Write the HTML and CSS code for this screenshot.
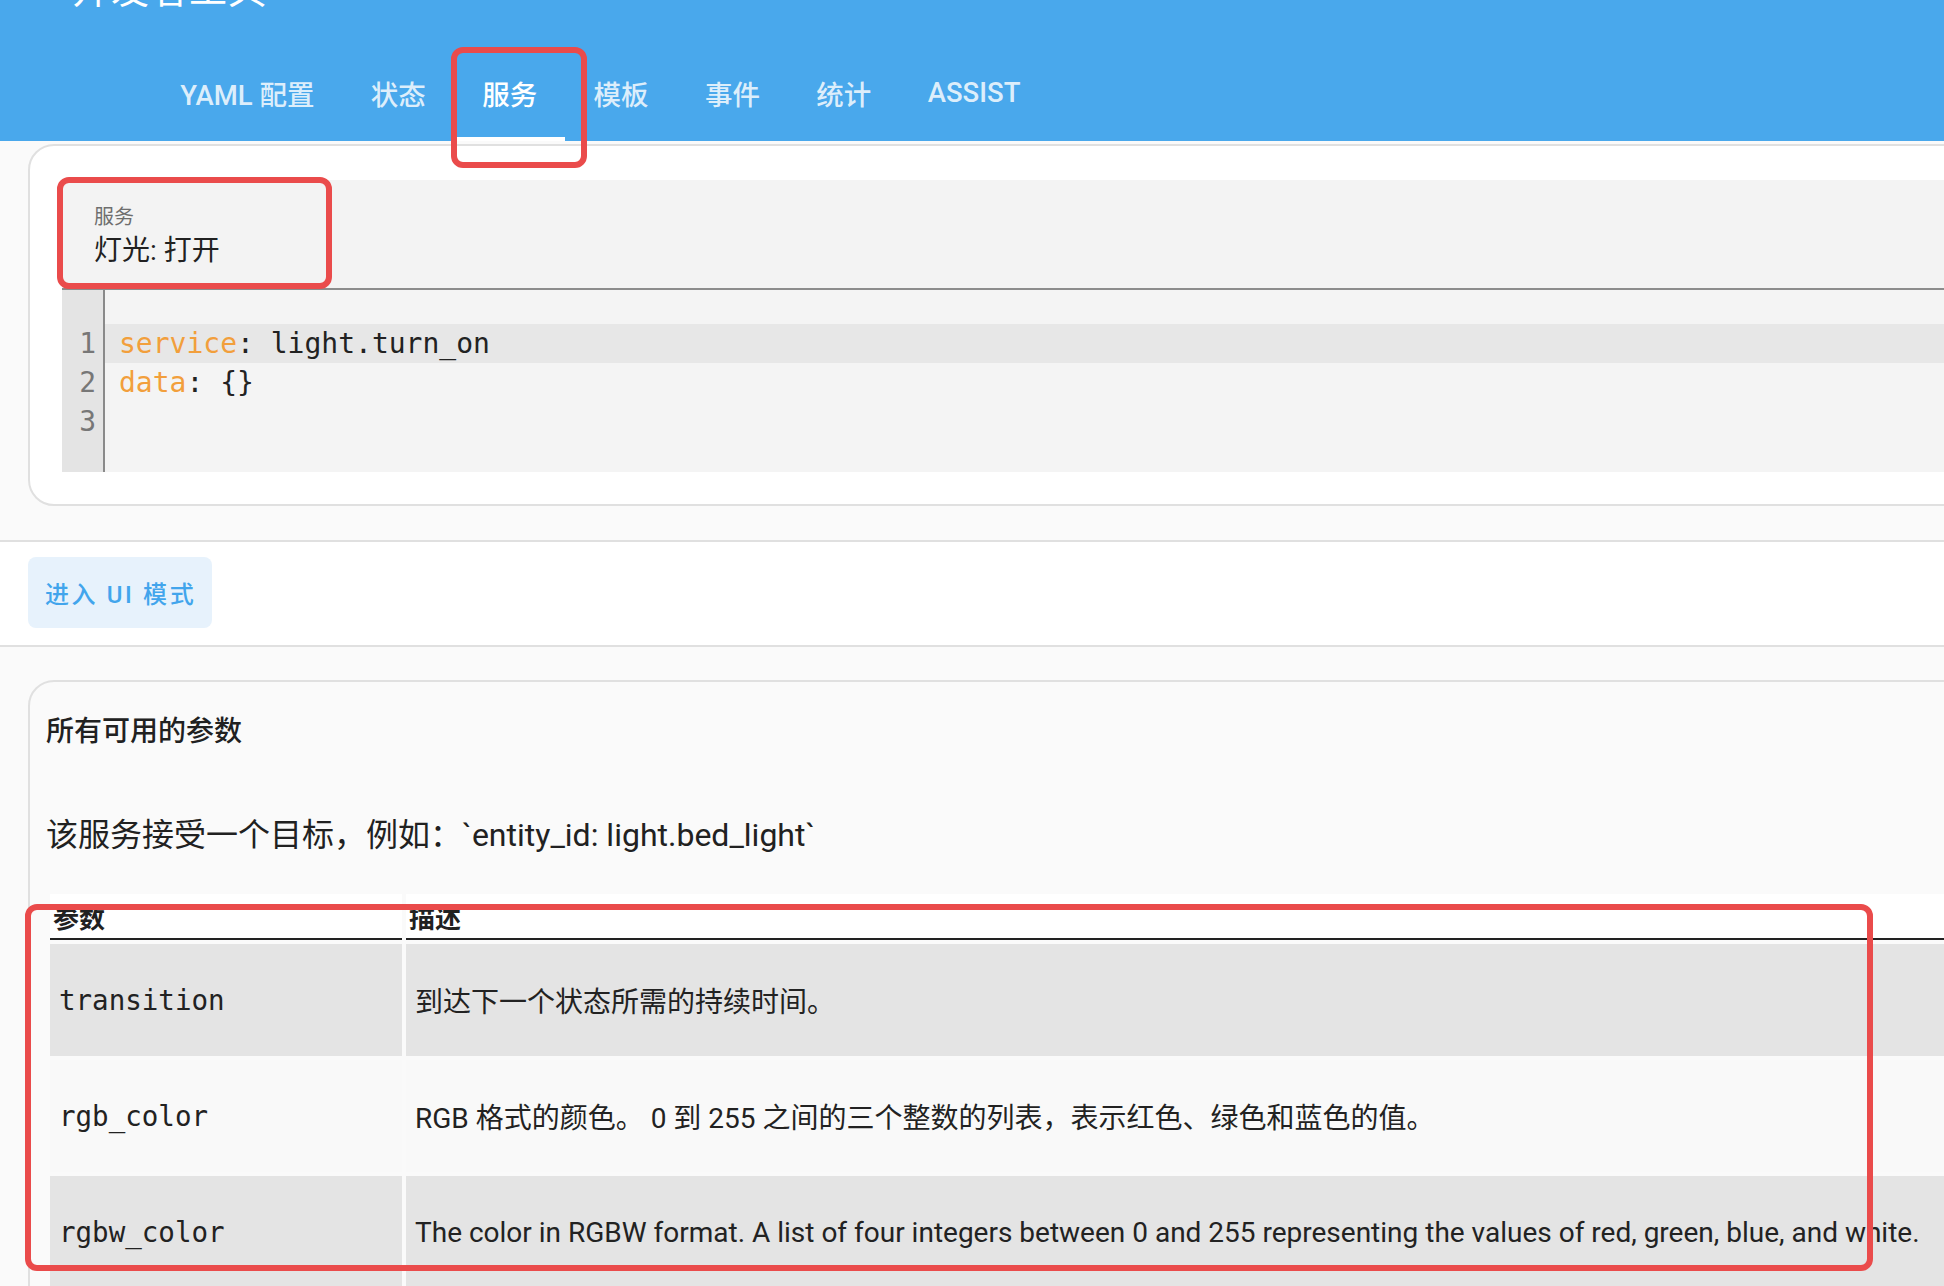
FILE: index.html
```html
<!DOCTYPE html>
<html lang="zh-CN">
<head>
<meta charset="utf-8">
<title>开发者工具</title>
<link rel="stylesheet" href="styles.css">
</head>
<body>
<div class="page">
  <header class="toolbar">
    <div class="title">开发者工具</div>
    <nav class="tabs">
      <div class="tab">YAML 配置</div>
      <div class="tab">状态</div>
      <div class="tab active">服务</div>
      <div class="tab">模板</div>
      <div class="tab">事件</div>
      <div class="tab">统计</div>
      <div class="tab">ASSIST</div>
    </nav>
  </header>

  <section class="top-area">
    <div class="card editor-card">
      <div class="field">
        <div class="field-label">服务</div>
        <div class="field-value">灯光: 打开</div>
      </div>
      <div class="code">
        <div class="gutter">
          <div class="num">1</div>
          <div class="num">2</div>
          <div class="num">3</div>
        </div>
        <div class="lines">
          <div class="line active"><span class="key">service</span>: light.turn_on</div>
          <div class="line"><span class="key">data</span>: {}</div>
          <div class="line"></div>
        </div>
      </div>
    </div>
  </section>

  <section class="button-bar">
    <button class="ui-btn">进入 UI 模式</button>
  </section>

  <section class="bottom-area">
    <div class="card fields-card">
      <h2 class="card-title">所有可用的参数</h2>
      <p class="desc">该服务接受一个目标，例如：`entity_id: light.bed_light`</p>
      <table class="params">
        <thead>
          <tr><th class="col-param">参数</th><th>描述</th></tr>
        </thead>
        <tbody>
          <tr><td class="param">transition</td><td>到达下一个状态所需的持续时间。</td></tr>
          <tr><td class="param">rgb_color</td><td>RGB 格式的颜色。 0 到 255 之间的三个整数的列表，表示红色、绿色和蓝色的值。</td></tr>
          <tr><td class="param">rgbw_color</td><td>The color in RGBW format. A list of four integers between 0 and 255 representing the values of red, green, blue, and white.</td></tr>
        </tbody>
      </table>
    </div>
  </section>

  <div class="mark mark-tab"></div>
  <div class="mark mark-field"></div>
  <div class="mark mark-table"></div>
</div>
</body>
</html>
```

FILE: styles.css
```css
html, body {
  margin: 0;
  padding: 0;
  overflow: hidden;
  background: #fafafa;
}

body {
  font-family: Roboto, "Noto Sans CJK SC", sans-serif;
  color: #212121;
}

.page {
  position: relative;
  width: 1944px;
  height: 1286px;
  overflow: hidden;
}

/* Header */
.toolbar {
  height: 141px;
  background: #49a8ec;
  color: #fff;
  display: flex;
  flex-direction: column;
}

.title {
  font-family: "Noto Sans CJK SC", sans-serif;
  font-size: 38px;
  line-height: 38px;
  height: 38px;
  margin-top: -32px;
  padding-left: 72px;
  letter-spacing: 1px;
}

.tabs {
  display: flex;
  margin-top: 38px;
  height: 97px;
  padding-left: 152px;
}

.tab {
  display: flex;
  align-items: center;
  padding: 0 28.2px;
  font-size: 27.5px;
  font-weight: 500;
  color: rgba(255, 255, 255, 0.82);
}

.tab.active {
  color: #fff;
  box-shadow: inset 0 -4px 0 #fff;
}

/* Top area with editor card */
.top-area {
  padding: 3px 0 34px 28px;
  border-bottom: 2px solid #e0e0e0;
}

.card {
  width: 2100px;
  border: 2px solid #e0e0e0;
  border-radius: 26px;
  box-sizing: border-box;
}

.editor-card {
  background: #fff;
  padding: 34px 0 32px 32px;
}

.field {
  height: 110px;
  box-sizing: border-box;
  background: #f3f3f3;
  border-bottom: 2px solid #8c8c8c;
  border-radius: 8px 0 0 0;
  padding: 25px 0 0 32px;
}

.field-label {
  font-size: 20px;
  line-height: 24px;
  color: #6e6e6e;
}

.field-value {
  margin-top: 5px;
  font-size: 28px;
  line-height: 34px;
  color: #212121;
}

.code {
  display: flex;
  height: 182px;
  background: #f4f4f4;
  font-family: "DejaVu Sans Mono", monospace;
  font-size: 28px;
}

.gutter {
  width: 41px;
  background: #e4e4e4;
  border-right: 2px solid #8a8a8a;
  padding-top: 34px;
  color: #777;
  text-align: right;
}

.num {
  line-height: 39px;
  padding-right: 7px;
}

.lines {
  flex: 1;
  padding-top: 34px;
}

.line {
  height: 39px;
  line-height: 39px;
  padding-left: 14px;
  color: #222;
  white-space: pre;
}

.line.active {
  background: #e7e7e7;
}

.key {
  color: #f29f3c;
}

/* Button bar */
.button-bar {
  background: #fff;
  padding: 15px 28px 17px;
  border-bottom: 2px solid #e0e0e0;
  display: flex;
}

.ui-btn {
  height: 71px;
  padding: 0 16px 0 17px;
  border: none;
  border-radius: 8px;
  background: #e7f2fc;
  color: #42a5ec;
  font-family: Roboto, "Noto Sans CJK SC", sans-serif;
  font-size: 24px;
  font-weight: 500;
  letter-spacing: 2.6px;
}

/* Bottom area */
.bottom-area {
  padding: 33px 0 0 28px;
}

.fields-card {
  background: #fafafa;
  padding: 30px 0 0 16px;
  height: 800px;
}

.card-title {
  margin: 0;
  font-size: 28px;
  line-height: 40px;
  font-weight: 500;
  color: #212121;
}

.desc {
  margin: 61px 0 37px 0;
  font-size: 32px;
  line-height: 44px;
  color: #212121;
}

.params {
  border-collapse: separate;
  border-spacing: 4px;
  width: 2040px;
  margin-top: -4px;
}

.params th {
  background: #fff;
  height: 44px;
  border-bottom: 2px solid #222;
  text-align: left;
  font-size: 26px;
  font-weight: 700;
  padding: 0 3px;
  vertical-align: middle;
}

.params .col-param {
  width: 352px;
  box-sizing: border-box;
}

.params td {
  height: 112px;
  padding: 0 9px;
  vertical-align: middle;
  font-size: 28px;
  color: #222;
}

.params tbody tr:nth-child(odd) td {
  background: #e4e4e4;
}

.params tbody tr:nth-child(even) td {
  background: #f9f9f9;
}

.params td.param {
  font-family: "DejaVu Sans Mono", monospace;
  font-size: 27.5px;
}

/* Annotation marks */
.mark {
  position: absolute;
  box-sizing: border-box;
  border: 6px solid #ea4b4b;
  border-radius: 12px;
}

.mark-tab {
  left: 451px;
  top: 47px;
  width: 136px;
  height: 121px;
}

.mark-field {
  left: 57px;
  top: 177px;
  width: 275px;
  height: 112px;
}

.mark-table {
  left: 25px;
  top: 904px;
  width: 1848px;
  height: 367px;
}
```
